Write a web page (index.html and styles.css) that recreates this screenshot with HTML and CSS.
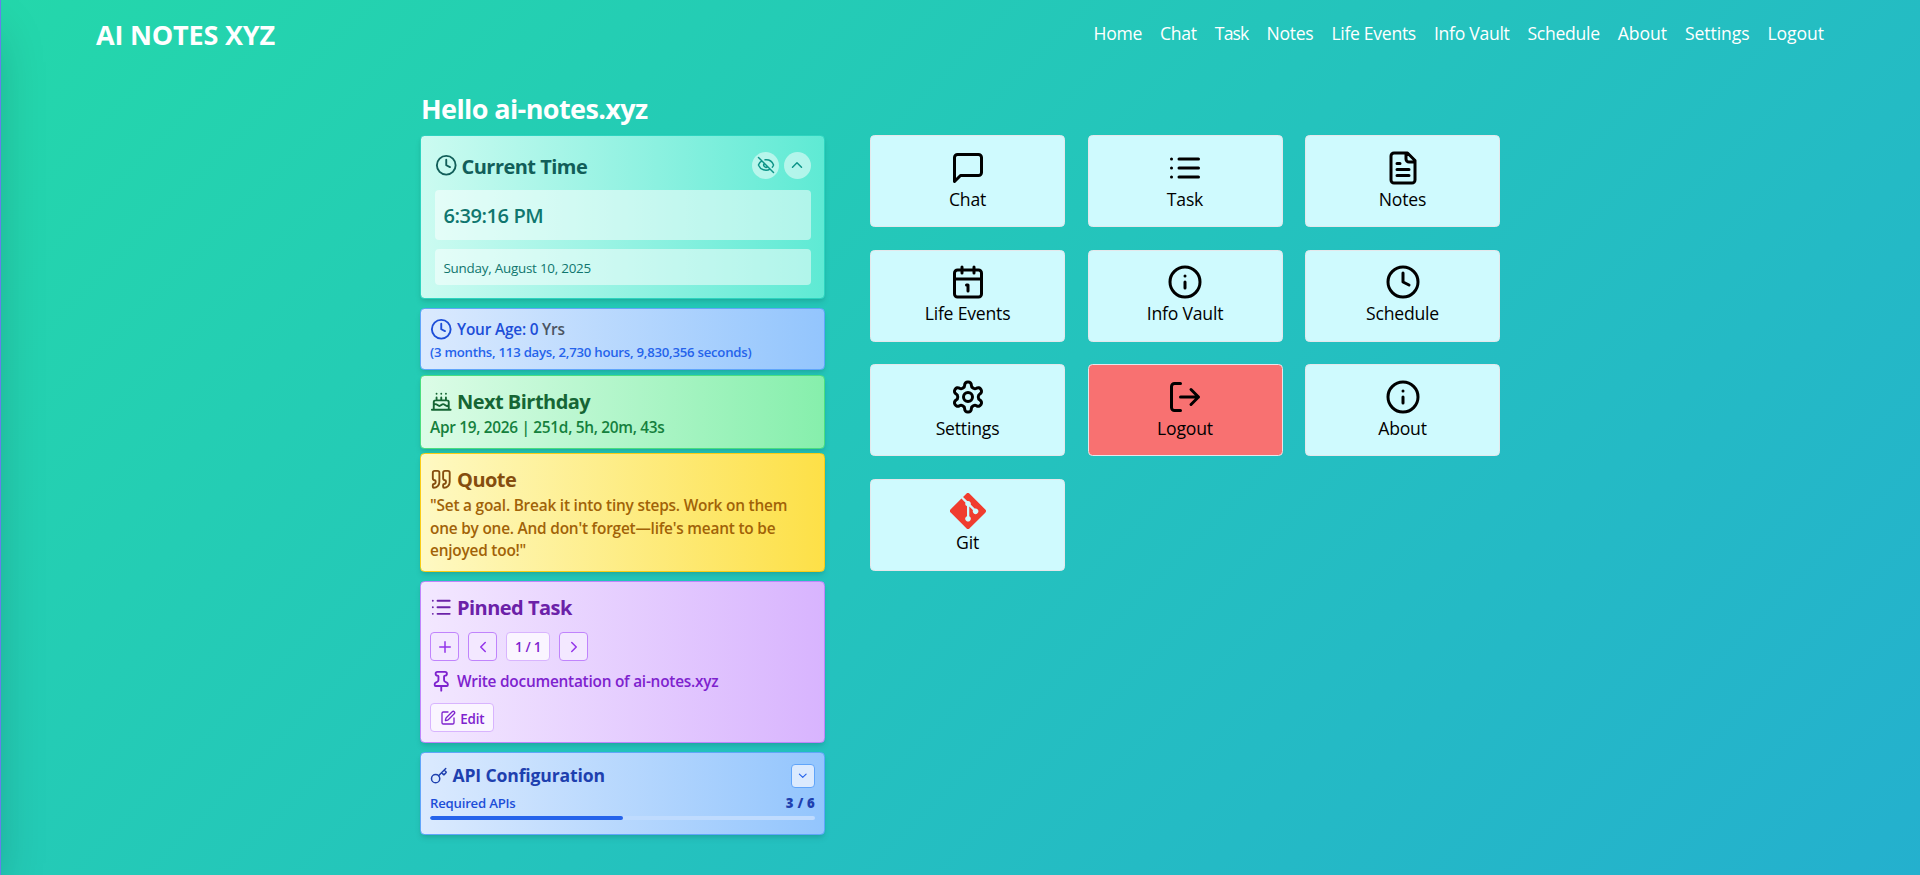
FILE: index.html
```html
<!DOCTYPE html>
<html lang="en">
<head>
<meta charset="utf-8">
<title>AI Notes XYZ</title>
<link rel="stylesheet" href="styles.css">
</head>
<body>
<div class="drawer"></div>
<header class="nav">
  <div class="brand">AI NOTES XYZ</div>
  <nav class="links">
    <a>Home</a><a>Chat</a><a class="tight">Task</a><a>Notes</a><a>Life Events</a><a>Info Vault</a><a>Schedule</a><a class="loose">About</a><a class="loose">Settings</a><a class="loose">Logout</a>
  </nav>
</header>
<main class="page">
  <h1 class="hello">Hello ai-notes.xyz</h1>
  <div class="columns">
    <section class="side">
      <article class="card time">
        <div class="time-head">
          <svg class="ic" viewBox="0 0 24 24"><circle cx="12" cy="12" r="10"/><path d="M12 6v6l4 2"/></svg>
          <h2 class="title">Current Time</h2>
          <button class="round"><svg viewBox="0 0 24 24"><path d="M10.733 5.076a10.744 10.744 0 0 1 11.205 6.575 1 1 0 0 1 0 .696 10.747 10.747 0 0 1-1.444 2.49M14.084 14.158a3 3 0 0 1-4.242-4.242M17.479 17.499a10.75 10.75 0 0 1-15.417-5.151 1 1 0 0 1 0-.696 10.75 10.75 0 0 1 4.446-5.143M2 2l20 20"/></svg></button>
          <button class="round"><svg viewBox="0 0 24 24"><path d="m18 15-6-6-6 6"/></svg></button>
        </div>
        <div class="clock">6:39:16 PM</div>
        <div class="date">Sunday, August 10, 2025</div>
      </article>

      <article class="card age">
        <div class="line"><svg class="ic" viewBox="0 0 24 24"><circle cx="12" cy="12" r="10"/><path d="M12 6v6l4 2"/></svg><span>Your Age: 0 <b class="yrs">Yrs</b></span></div>
        <p class="small">(3 months, 113 days, 2,730 hours, 9,830,356 seconds)</p>
      </article>

      <article class="card birthday">
        <div class="head"><svg class="ic" viewBox="0 0 24 24"><path d="M20 21v-8a2 2 0 0 0-2-2H6a2 2 0 0 0-2 2v8M4 16s.5-1 2-1 2.5 2 4 2 2.5-2 4-2 2.5 2 4 2 2-1 2-1M2 21h20M7 8v3M12 8v3M17 8v3M7 4h.01M12 4h.01M17 4h.01"/></svg><h2 class="title">Next Birthday</h2></div>
        <p class="body">Apr 19, 2026 | 251d, 5h, 20m, 43s</p>
      </article>

      <article class="card quote">
        <div class="head"><svg class="ic" viewBox="0 0 24 24"><path d="M16 3a2 2 0 0 0-2 2v6a2 2 0 0 0 2 2 1 1 0 0 1 1 1v1a2 2 0 0 1-2 2 1 1 0 0 0-1 1v2a1 1 0 0 0 1 1 6 6 0 0 0 6-6V5a2 2 0 0 0-2-2zM5 3a2 2 0 0 0-2 2v6a2 2 0 0 0 2 2 1 1 0 0 1 1 1v1a2 2 0 0 1-2 2 1 1 0 0 0-1 1v2a1 1 0 0 0 1 1 6 6 0 0 0 6-6V5a2 2 0 0 0-2-2z"/></svg><h2 class="title">Quote</h2></div>
        <p class="body">"Set a goal. Break it into tiny steps. Work on them<br>one by one. And don't forget—life's meant to be<br>enjoyed too!"</p>
      </article>

      <article class="card pinned">
        <div class="head"><svg class="ic" viewBox="0 0 24 24"><path d="M3 5h.01M3 12h.01M3 19h.01M8 5h13M8 12h13M8 19h13"/></svg><h2 class="title">Pinned Task</h2></div>
        <div class="pager">
          <button class="sq"><svg viewBox="0 0 24 24"><path d="M5 12h14M12 5v14"/></svg></button>
          <button class="sq"><svg viewBox="0 0 24 24"><path d="m15 18-6-6 6-6"/></svg></button>
          <div class="count">1 / 1</div>
          <button class="sq"><svg viewBox="0 0 24 24"><path d="m9 18 6-6-6-6"/></svg></button>
        </div>
        <div class="task"><svg class="ic" viewBox="0 0 24 24"><path d="M12 17v5M9 10.76a2 2 0 0 1-1.11 1.79l-1.78.9A2 2 0 0 0 5 15.24V16a1 1 0 0 0 1 1h12a1 1 0 0 0 1-1v-.76a2 2 0 0 0-1.11-1.79l-1.78-.9A2 2 0 0 1 15 10.76V7a1 1 0 0 1 1-1 2 2 0 0 0 0-4H8a2 2 0 0 0 0 4 1 1 0 0 1 1 1z"/></svg><span>Write documentation of ai-notes.xyz</span></div>
        <button class="edit"><svg viewBox="0 0 24 24"><path d="M12 3H5a2 2 0 0 0-2 2v14a2 2 0 0 0 2 2h14a2 2 0 0 0 2-2v-7M18.375 2.625a1 1 0 0 1 3 3l-9.013 9.014a2 2 0 0 1-.853.505l-2.873.84a.5.5 0 0 1-.62-.62l.84-2.873a2 2 0 0 1 .506-.852z"/></svg><span>Edit</span></button>
      </article>

      <article class="card api">
        <div class="api-head"><svg class="key" viewBox="0 0 24 24"><path d="m15.5 7.5 2.3 2.3a1 1 0 0 0 1.4 0l2.1-2.1a1 1 0 0 0 0-1.4L19 4M21 2l-9.6 9.6"/><circle cx="7.5" cy="15.5" r="5.5"/></svg><h2>API Configuration</h2><button class="mini"><svg viewBox="0 0 24 24"><path d="m6 9 6 6 6-6"/></svg></button></div>
        <div class="api-row"><span>Required APIs</span><b>3 / 6</b></div>
        <div class="bar"><div class="fill" style="width:50%"></div></div>
      </article>
    </section>

    <section class="tiles">
      <a class="tile"><svg viewBox="0 0 24 24"><path d="M21 15a2 2 0 0 1-2 2H7l-4 4V5a2 2 0 0 1 2-2h14a2 2 0 0 1 2 2z"/></svg><span>Chat</span></a>
      <a class="tile"><svg viewBox="0 0 24 24"><path d="M8 6h13M8 12h13M8 18h13M3 6h.01M3 12h.01M3 18h.01"/></svg><span>Task</span></a>
      <a class="tile"><svg viewBox="0 0 24 24"><path d="M15 2H6a2 2 0 0 0-2 2v16a2 2 0 0 0 2 2h12a2 2 0 0 0 2-2V7zM14 2v4a2 2 0 0 0 2 2h4M10 9H8M16 13H8M16 17H8"/></svg><span>Notes</span></a>
      <a class="tile"><svg viewBox="0 0 24 24"><path d="M8 2v4M16 2v4M3 10h18M11 14h1v4"/><rect x="3" y="4" width="18" height="18" rx="2"/></svg><span>Life Events</span></a>
      <a class="tile"><svg viewBox="0 0 24 24"><circle cx="12" cy="12" r="10"/><path d="M12 16v-4M12 8h.01"/></svg><span>Info Vault</span></a>
      <a class="tile"><svg viewBox="0 0 24 24"><circle cx="12" cy="12" r="10"/><path d="M12 6v6l4 2"/></svg><span>Schedule</span></a>
      <a class="tile"><svg viewBox="0 0 24 24"><path d="M12.22 2h-.44a2 2 0 0 0-2 2v.18a2 2 0 0 1-1 1.73l-.43.25a2 2 0 0 1-2 0l-.15-.08a2 2 0 0 0-2.73.73l-.22.38a2 2 0 0 0 .73 2.73l.15.1a2 2 0 0 1 1 1.72v.51a2 2 0 0 1-1 1.74l-.15.09a2 2 0 0 0-.73 2.73l.22.38a2 2 0 0 0 2.73.73l.15-.08a2 2 0 0 1 2 0l.43.25a2 2 0 0 1 1 1.73V20a2 2 0 0 0 2 2h.44a2 2 0 0 0 2-2v-.18a2 2 0 0 1 1-1.73l.43-.25a2 2 0 0 1 2 0l.15.08a2 2 0 0 0 2.73-.73l.22-.39a2 2 0 0 0-.73-2.73l-.15-.08a2 2 0 0 1-1-1.74v-.5a2 2 0 0 1 1-1.74l.15-.09a2 2 0 0 0 .73-2.73l-.22-.38a2 2 0 0 0-2.73-.73l-.15.08a2 2 0 0 1-2 0l-.43-.25a2 2 0 0 1-1-1.73V4a2 2 0 0 0-2-2z"/><circle cx="12" cy="12" r="3"/></svg><span>Settings</span></a>
      <a class="tile danger"><svg viewBox="0 0 24 24"><path d="M9 21H5a2 2 0 0 1-2-2V5a2 2 0 0 1 2-2h4M16 17l5-5-5-5M21 12H9"/></svg><span>Logout</span></a>
      <a class="tile"><svg viewBox="0 0 24 24"><circle cx="12" cy="12" r="10"/><path d="M12 16v-4M12 8h.01"/></svg><span>About</span></a>
      <a class="tile"><svg class="git" viewBox="0 0 92 92"><path d="M90.156 41.965 50.036 1.848a5.918 5.918 0 0 0-8.372 0l-8.328 8.332 10.566 10.566a7.03 7.03 0 0 1 7.23 1.684 7.034 7.034 0 0 1 1.669 7.277l10.187 10.184a7.028 7.028 0 0 1 7.278 1.672 7.04 7.04 0 0 1 0 9.957 7.05 7.05 0 0 1-9.965 0 7.044 7.044 0 0 1-1.528-7.66l-9.5-9.497V59.36a7.04 7.04 0 0 1 1.86 11.29 7.04 7.04 0 0 1-9.957 0 7.04 7.04 0 0 1 0-9.958 7.06 7.06 0 0 1 2.304-1.539V33.926a7.049 7.049 0 0 1-3.82-9.234L29.242 14.272 1.73 41.777a5.925 5.925 0 0 0 0 8.371L41.852 90.27a5.925 5.925 0 0 0 8.37 0l39.934-39.934a5.925 5.925 0 0 0 0-8.371"/></svg><span>Git</span></a>
    </section>
  </div>
</main>
</body>
</html>
```
FILE: styles.css
```css
* { box-sizing: border-box; margin: 0; padding: 0; }
html { font-size: 18px; }
body {
  min-height: 875px;
  overflow: hidden;
  font-family: "Open Sans", "Noto Sans", sans-serif;
  background: linear-gradient(135deg, #24d7ab 0%, #24b0ce 100%);
}
svg { fill: none; stroke: currentColor; stroke-width: 2; stroke-linecap: round; stroke-linejoin: round; display: block; flex: none; }
.drawer { position: fixed; top: 0; left: -299px; width: 300px; height: 875px; background: #667eea; box-shadow: 0 25px 50px -12px rgba(0, 0, 0, .25); }

.nav { display: flex; justify-content: space-between; align-items: center; width: 1728px; height: 70px; margin: 0 auto; color: #fff; }
.brand { padding-bottom: 2px; font-size: 27px; font-weight: 700; letter-spacing: -.18px; }
.links { display: flex; gap: 18px; padding-bottom: 4px; font-size: 17.6px; letter-spacing: -.3px; }
.links .tight { letter-spacing: -.85px; }
.links .loose { letter-spacing: -.08px; }

.page { width: 1080px; margin: 0 auto; }
.hello { height: 65px; padding: 19px 0 0 1px; font-size: 27px; line-height: 40px; font-weight: 700; letter-spacing: -.6px; color: #fff; }
.columns { display: flex; gap: 45px; align-items: flex-start; }
.side { width: 405px; display: flex; flex-direction: column; }
.card { border: 1px solid; border-radius: 4.5px; padding: 9px; box-shadow: 0 4px 6px -1px rgba(0, 0, 0, .1), 0 2px 4px -2px rgba(0, 0, 0, .1); }
.ic { width: 22.5px; height: 22.5px; }
.title { padding-top: 2px; font-size: 20px; line-height: 29.5px; font-weight: 700; letter-spacing: -.53px; }
.head { display: flex; align-items: center; gap: 4.5px; }
.body { padding-top: .5px; font-size: 15.4px; line-height: 22.5px; font-weight: 600; letter-spacing: -.21px; }

.time { height: 164px; padding: 13.5px; border-color: #2dd4bf; background: linear-gradient(to right, #ccfbf1, #5eead4); color: #115e59; }
.time-head { display: flex; align-items: center; gap: 4.5px; height: 31.5px; margin-bottom: 9px; }
.time-head .title { flex: 1; }
.round { display: flex; align-items: center; justify-content: center; width: 27px; height: 27px; border: 0; border-radius: 50%; background: rgba(255, 255, 255, .5); color: #0d9488; }
.round svg { width: 18px; height: 18px; }
.clock, .date { padding: 10px 9px 8px; border-radius: 4px; background: rgba(255, 255, 255, .5); color: #0f766e; }
.clock { margin-bottom: 9px; font-size: 20px; line-height: 31.5px; font-weight: 600; letter-spacing: -.43px; }
.date { font-size: 13.4px; line-height: 18px; letter-spacing: -.23px; }

.age { height: 62px; margin-top: 9px; border-color: #60a5fa; background: linear-gradient(to right, #dbeafe, #93c5fd); color: #1d4ed8; }
.line { display: flex; align-items: center; gap: 4.5px; font-size: 15.4px; line-height: 23px; font-weight: 600; letter-spacing: -.2px; }
.yrs { font-weight: 600; color: #4b5563; }
.small { padding-top: 1px; font-size: 13.2px; line-height: 20px; font-weight: 600; letter-spacing: -.24px; color: #2563eb; }

.birthday { height: 74px; margin-top: 5px; border-color: #4ade80; background: linear-gradient(to right, #dcfce7, #86efac); color: #166534; }
.birthday .body { padding-top: 0; letter-spacing: -.3px; color: #15803d; }
.quote { height: 119px; margin-top: 4px; border-color: #facc15; background: linear-gradient(to right, #fef9c3, #fde047); color: #854d0e; }
.quote .body { color: #a16207; }

.pinned { height: 162px; margin-top: 9px; border-color: #c084fc; background: linear-gradient(to right, #f3e8ff, #d8b4fe); color: #6b21a8; }
.pager { display: flex; gap: 9px; margin-top: 9.5px; }
.sq, .count, .edit, .mini { display: flex; align-items: center; justify-content: center; border: 1px solid #c084fc; border-radius: 4px; background: #f3e8ff; color: #9333ea; font-family: inherit; }
.sq { width: 29px; height: 29px; }
.sq svg { width: 18px; height: 18px; }
.count { width: 44px; height: 29px; padding-top: 1px; border-color: #d8b4fe; background: #faf5ff; color: #7e22ce; font-size: 13.4px; font-weight: 600; letter-spacing: -.3px; }
.task { display: flex; align-items: center; gap: 4.5px; margin-top: 9px; font-size: 15.4px; line-height: 23px; font-weight: 600; letter-spacing: -.24px; color: #7e22ce; }
.edit { gap: 4.5px; width: 64px; height: 29px; margin-top: 10px; border-color: #d8b4fe; background: #faf5ff; color: #7e22ce; font-size: 13.4px; font-weight: 600; letter-spacing: -.2px; }
.edit svg { width: 16px; height: 16px; }
.edit span { padding-top: 2px; }

.api { height: 83px; margin-top: 9px; border-color: #60a5fa; background: linear-gradient(to right, #dbeafe, #93c5fd); color: #1e40af; }
.api-head { display: flex; align-items: center; gap: 4.5px; height: 27px; }
.api-head h2 { flex: 1; font-size: 17.6px; line-height: 27px; letter-spacing: -.16px; }
.key { width: 18px; height: 18px; }
.mini { width: 24px; height: 24px; border-color: #60a5fa; background: #dbeafe; color: #2563eb; }
.mini svg { width: 13.5px; height: 13.5px; }
.api-row { display: flex; justify-content: space-between; margin-top: 5px; font-size: 13.2px; line-height: 18px; font-weight: 600; letter-spacing: -.23px; color: #1d4ed8; }
.api-row b { letter-spacing: .2px; color: #1e40af; }
.bar { height: 4px; margin-top: 4px; border-radius: 2px; background: #bfdbfe; overflow: hidden; }
.fill { height: 100%; border-radius: 2px; background: #2563eb; }

.tiles { width: 630px; display: grid; grid-template-columns: repeat(3, 195px); gap: 22.5px; }
.tile { display: flex; flex-direction: column; align-items: center; height: 92px; padding-top: 13.5px; border: 1px solid #e5e7eb; border-radius: 4.5px; background: #cffafe; color: #000; font-size: 17.6px; line-height: 27px; letter-spacing: -.2px; }
.tile svg { width: 36px; height: 36px; }
.tile.danger { background: #f87171; }
.tile .git { fill: #f03c2e; stroke: none; }
```
